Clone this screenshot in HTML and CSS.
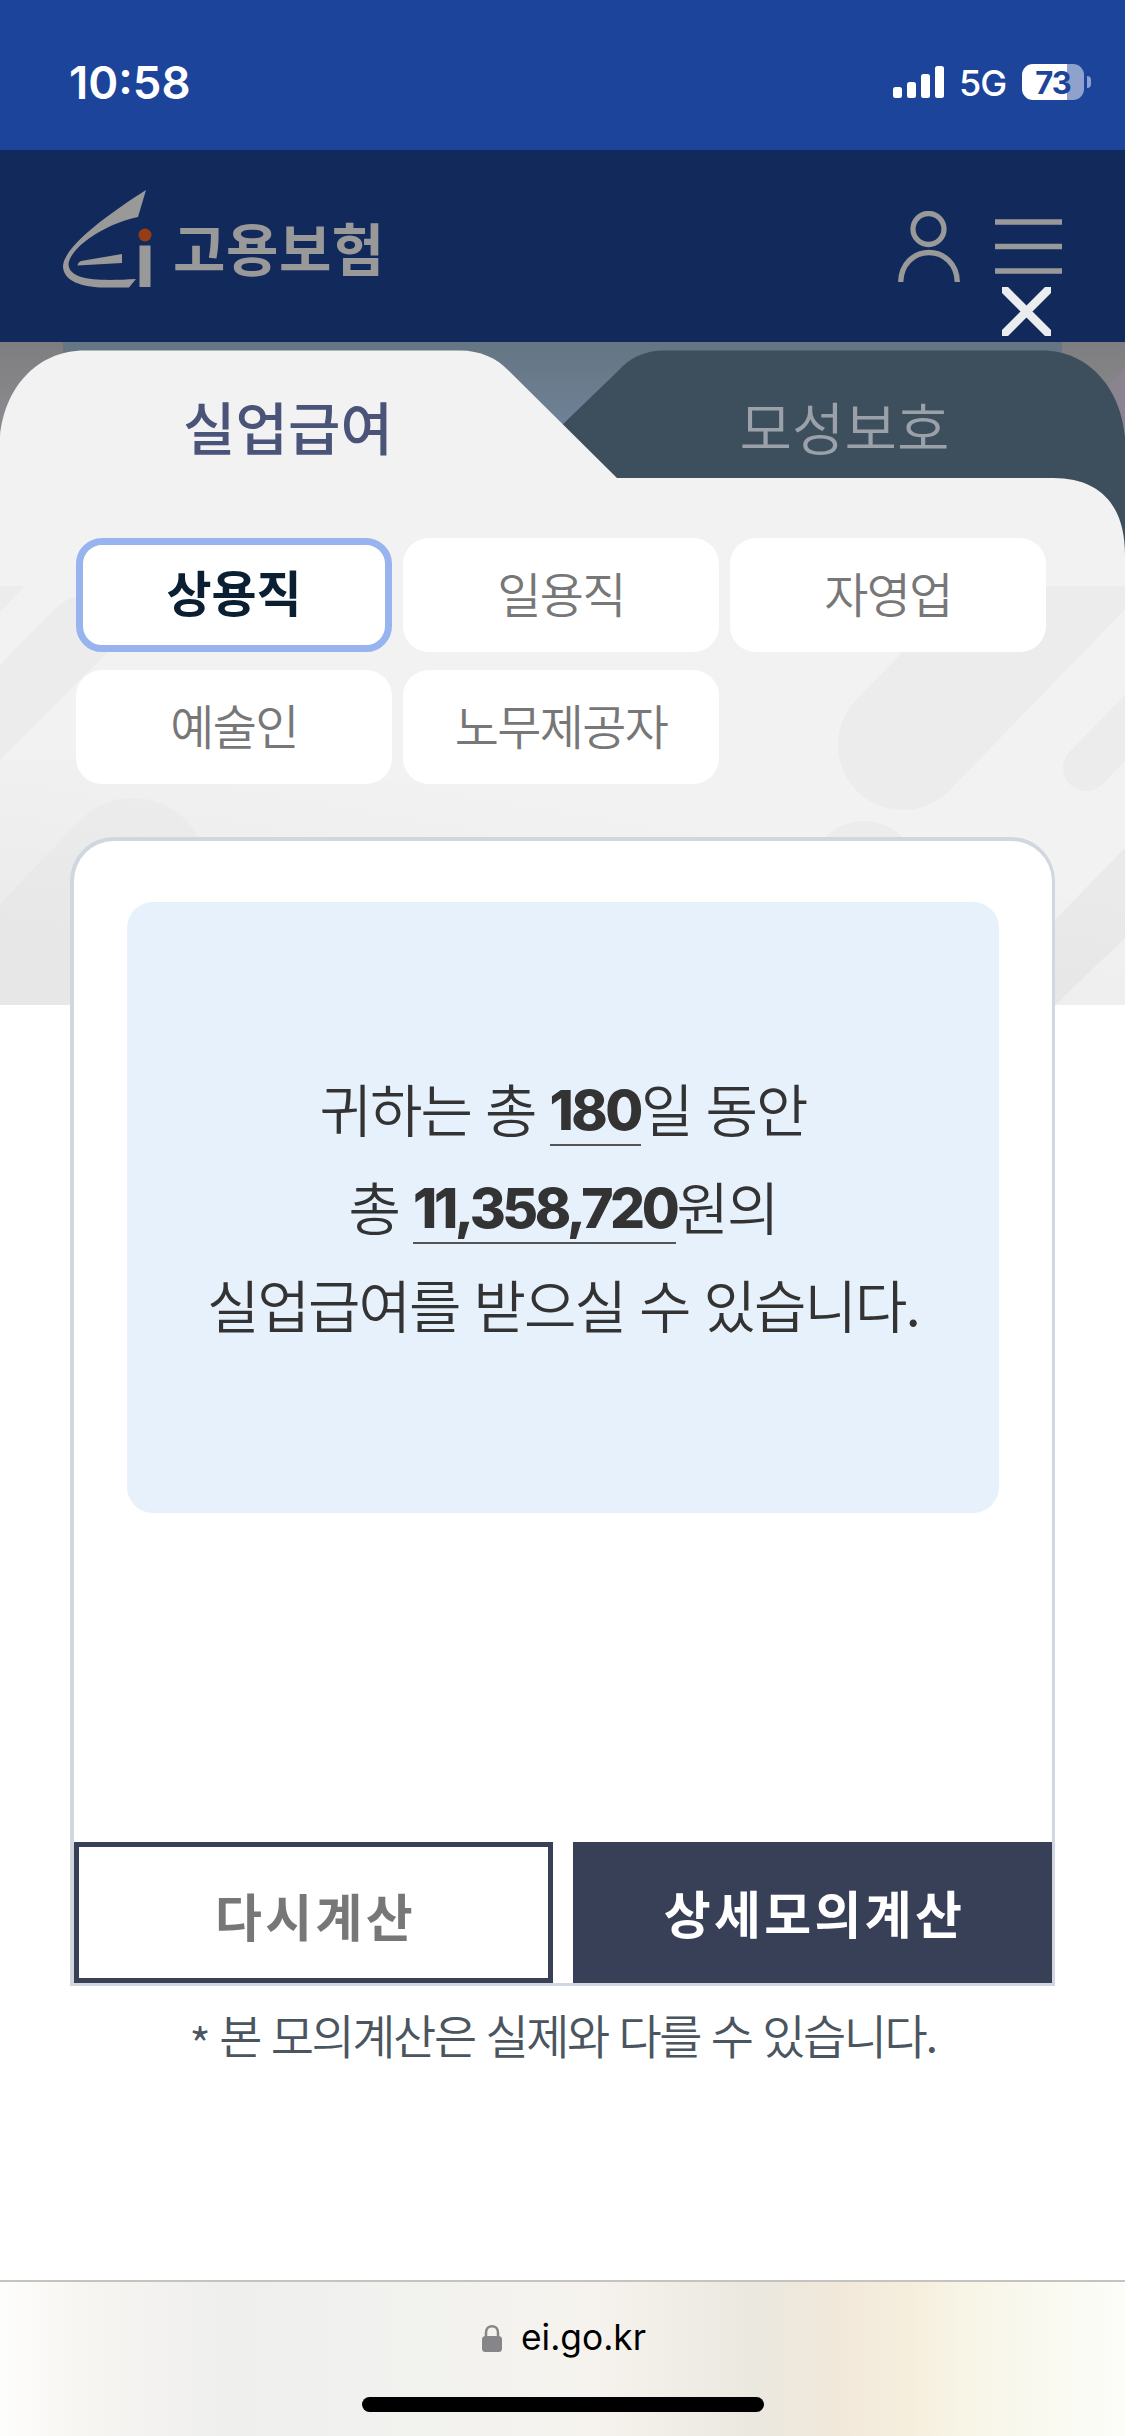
FILE: index.html
```html
<!DOCTYPE html>
<html lang="ko">
<head>
<meta charset="utf-8">
<title>고용보험</title>
<link rel="stylesheet" href="styles.css">
</head>
<body>
<div class="status">
  <span class="clock">10:58</span>
  <div class="status-right">
    <svg class="signal" width="51" height="32" viewBox="0 0 51 32" fill="#fff"><rect y="21" width="9" height="11" rx="2.5"/><rect x="14" y="16" width="9" height="16" rx="2.5"/><rect x="28" y="8" width="9" height="24" rx="2.5"/><rect x="42" width="9" height="32" rx="2.5"/></svg>
    <span class="net">5G</span>
    <span class="battery">73</span><span class="tip"></span>
  </div>
</div>
<header class="header">
  <div class="brand">
    <svg width="89" height="98" viewBox="63 190 89 98" fill="#999"><path d="M146 190C110 213 64 246 63 266C63 281 82 287.500 105 287.500H129L136 279C100 281 69 281 68.500 264C70 248 104 224 138 217Z"/><path d="M81 261L122 254V263L77.500 265.500Q78 262 81 261Z"/><path d="M139.500 245.500H150.500V287H139.500Z"/><circle cx="145" cy="235" r="6.500" fill="#963d13"/></svg>
    <span class="brand-name">고용보험</span>
  </div>
  <div class="tools">
    <svg width="62" height="71" viewBox="898 211 62 71" fill="none" stroke="#999" stroke-width="5.300"><ellipse cx="928.500" cy="229" rx="15.500" ry="15.500"/><path d="M900.700 282C901 264 914 252.500 929 252.500S957 264 957.300 282"/></svg>
    <svg width="67" height="71" viewBox="995 211 67 71" fill="none" stroke="#999" stroke-width="5.500"><path d="M995 222H1062M995 246.500H1062M995 271H1062"/></svg>
  </div>
  <svg class="close" width="49" height="49" viewBox="0 0 49 49" stroke="#ebecee" stroke-width="8.500"><path d="M-2 -2L51 51M51 -2L-2 51"/></svg>
</header>
<main class="main">
  <svg class="backdrop" width="1125" height="663" viewBox="0 342 1125 663">
    <defs>
      <linearGradient id="sky" x1="0" y1="0" x2="0" y2="1"><stop offset="0" stop-color="#647683"/><stop offset="1" stop-color="#71839a"/></linearGradient>
      <linearGradient id="edge" x1="0" y1="0" x2="0" y2="1"><stop offset="0" stop-color="#7e7e80"/><stop offset="1" stop-color="#918f94"/></linearGradient>
      <linearGradient id="shade" gradientUnits="userSpaceOnUse" x1="600" y1="800" x2="560" y2="1030"><stop offset="0" stop-color="#000" stop-opacity="0"/><stop offset="1" stop-color="#000" stop-opacity=".03"/></linearGradient>
      <clipPath id="art"><path d="M0 586H1125V1005H0Z"/></clipPath>
    </defs>
    <path fill="url(#edge)" d="M0 342H1125V460H0Z"/>
    <path fill="#8a8390" d="M1108 386L1125 368V460H1108Z"/>
    <path fill="url(#sky)" d="M63 342H1062V440H63Z"/>
    <path fill="#3d4e5d" d="M560 427L618 371Q636 350.500 664 350.500H1042C1090 350.500 1121 390 1125 437V600H560Z"/>
    <path fill="#f2f2f2" d="M0 437C4 390 35 350.500 85 350.500H460C480 350.500 497 358 509 371L617 478H1053C1100 478 1125 505 1125 555V1005H0Z"/>
    <g clip-path="url(#art)" stroke="#ececec" fill="none" stroke-linecap="round">
      <path fill="#ececec" stroke="none" d="M0 586H25L0 612ZM0 665L56 608Q67 598 78 596L120 640L0 760Z"/>
      <path stroke-width="130" d="M903 745L1125 516"/>
      <path stroke-width="46" d="M1086 768L1150 702"/>
      <path stroke-width="108" d="M864 875L760 980"/>
      <path stroke="#eee" stroke-width="148" d="M133 872L-40 1053"/>
      <path fill="#eaeaea" stroke="none" d="M1050 925L1125 848V938L1055 1005H1040Z"/>
    </g>
    <path fill="url(#shade)" d="M0 760H1125V1005H0Z"/>
  </svg>
  <nav class="tabs"><span class="tab on">실업급여</span><span class="tab">모성보호</span></nav>
  <div class="types">
    <span class="type on">상용직</span><span class="type">일용직</span><span class="type">자영업</span><span class="type">예술인</span><span class="type">노무제공자</span>
  </div>
  <section class="card">
    <div class="result">
      <p>귀하는 총 <b class="days">180</b>일 동안</p>
      <p>총 <b class="sum">11,358,720</b>원의</p>
      <p>실업급여를 받으실 수 있습니다.</p>
    </div>
    <div class="actions"><span class="btn">다시계산</span><span class="btn dark">상세모의계산</span></div>
  </section>
  <p class="note"><span class="star">*</span> 본 모의계산은 실제와 다를 수 있습니다.</p>
</main>
<footer class="browser">
  <div class="url"><svg width="20" height="28" viewBox="0 0 20 28"><path d="M4 13V8.500C4 0 16 0 16 8.500V13" fill="none" stroke="#868688" stroke-width="2.500"/><rect y="12" width="20" height="16" rx="3.500" fill="#868688"/></svg><span>ei.go.kr</span></div>
  <div class="home"></div>
</footer>
</body>
</html>
```
FILE: styles.css
```css
* { box-sizing: border-box; }
body {
  margin: 0; width: 1125px; height: 2436px; overflow: hidden; background: #fff;
  display: flex; flex-direction: column;
  font-family: "Noto Sans CJK KR", sans-serif; white-space: nowrap;
}
p { margin: 0; }
.status {
  height: 150px; padding: 14px 34px 0 69px; background: #1c449b; color: #fff;
  display: flex; align-items: center; justify-content: space-between;
  font-family: Inter, sans-serif;
}
.clock { font-size: 45.500px; font-weight: 600; }
.status-right { display: flex; align-items: center; }
.net { margin: 2px 0 0 15px; width: 63px; font-size: 36px; letter-spacing: -1px; font-weight: 500; }
.battery {
  width: 62px; height: 36px; border-radius: 11px; text-align: center; line-height: 37px;
  background: linear-gradient(90deg, #fff 45px, #8ea2cd 45px);
  color: #1c449b; font-size: 31px; font-weight: 700; letter-spacing: -1px;
}
.tip { margin-left: 3px; width: 4px; height: 12px; border-radius: 0 6px 6px 0; background: #8ea2cd; }

.header {
  position: relative; height: 192px; background: #12295c;
  display: flex; justify-content: space-between; align-items: flex-start;
  padding: 40px 63px 0; flex: none;
}
.brand { display: flex; }
.brand-name {
  margin: 16px 0 0 21px; line-height: 80px;
  font-size: 57px; font-weight: 700; color: #999; letter-spacing: .5px;
}
.tools { display: flex; gap: 35px; padding-top: 21px; }
.close { position: absolute; left: 1002px; top: 137px; }

.main { position: relative; height: 1938px; flex: none; }
.backdrop { position: absolute; left: 0; top: 0; z-index: -1; }
.tabs { height: 196px; padding: 4px 0 0 12px; display: flex; }
.tab {
  width: 561px; padding-top: 37px; line-height: 84px; text-align: center;
  font-size: 57px; font-weight: 350; color: #9ba1a9;
}
.tab.on { width: 552px; font-weight: 500; color: #4a5378; }
.types {
  padding: 0 76px; display: grid; grid-template-columns: repeat(3, 316px);
  column-gap: 11px; row-gap: 18px;
}
.type {
  height: 114px; border-radius: 26px; background: #fff; text-align: center;
  line-height: 108px; font-size: 48px; letter-spacing: -1.700px; font-weight: 350; color: #777;
}
.type.on { border: 7px solid #97b4ef; line-height: 91px; font-weight: 700; color: #0a2032; letter-spacing: 0; font-size: 49px; }
.card {
  margin: 53px 70px 0 70px; height: 1149px;
  border: solid #d1d7de; border-width: 4px 3px 3px 4px;
  border-radius: 44px 44px 0 0; background: #fff;
  display: flex; flex-direction: column; justify-content: space-between;
}
.result {
  margin: 61px 53px 0 53px; height: 611px; border-radius: 26px; background: #e7f1fc;
  padding-top: 156px; text-align: center; color: #333;
  font-size: 57px; line-height: 98px; font-weight: 350; letter-spacing: -1.950px;
}
.result b {
  display: inline-block; height: 66px; line-height: 60px; border-bottom: 2px solid #555;
  font-family: Inter, sans-serif; font-size: 55px; font-weight: 800; letter-spacing: -3.400px;
  vertical-align: baseline; position: relative; top: -2px;
}
.result .days { letter-spacing: -2.500px; }
.actions { display: flex; justify-content: space-between; height: 141px; }
.btn {
  width: 479px; border: 5px solid #384058; text-align: center; line-height: 137px;
  padding-left: 4px; font-size: 51px; font-weight: 700; letter-spacing: 3.300px; color: #777;
}
.btn.dark { background: #384058; color: #fff; line-height: 130px; }
.note {
  margin-top: 13px; text-align: center; font-size: 47px; line-height: 70px;
  font-weight: 350; letter-spacing: -2.450px; color: #4a5560;
}
.star { position: relative; top: 9px; }
.browser {
  height: 156px; flex: none; border-top: 2px solid #c4c3c0;
  background: linear-gradient(90deg, #fdfdfb 0, #f7f5f2 8%, #efefee 20%, #f2f2ef 38%, #f6f3ee 53%, #ebe8e0 67%, #f1e8da 74%, #f6eedd 81%, #f8f5e7 86%, #fafaf2 94%, #fcfcf9);
  display: flex; flex-direction: column; align-items: center;
}
.url {
  display: flex; align-items: center; gap: 19px; margin: 33px 0 0 3px; height: 46px;
  font: 35.300px/46px Inter, sans-serif;
}
.home { width: 402px; height: 15px; border-radius: 8px; background: #000; margin-top: 36px; }
```
